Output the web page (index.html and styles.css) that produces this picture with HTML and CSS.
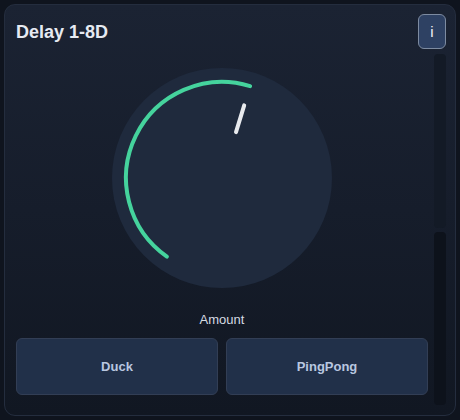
FILE: index.html
```html
<!DOCTYPE html>
<html>
<head>
<meta charset="utf-8">
<link rel="stylesheet" href="styles.css">
</head>
<body>
<div class="card">
  <div class="header">
    <div class="title">Delay 1-8D</div>
    <button class="info">i</button>
  </div>
  <div class="main">
    <div class="content">
      <div class="knob-wrap">
        <svg class="knob" width="220" height="220" viewBox="0 0 220 220">
          <circle cx="110" cy="110" r="110" fill="#1f2a3d"/>
          <path d="M 54.9 188.6 A 96 96 0 0 1 138.1 18.2" fill="none" stroke="#45d39d" stroke-width="4" stroke-linecap="round"/>
          <line x1="124.0" y1="64.1" x2="132.2" y2="37.3" stroke="#e8eaee" stroke-width="4" stroke-linecap="round"/>
        </svg>
      </div>
      <div class="label">Amount</div>
      <div class="buttons">
        <button class="btn">Duck</button>
        <button class="btn">PingPong</button>
      </div>
    </div>
    <div class="meter">
      <div class="meter-top"></div>
      <div class="meter-bottom"></div>
    </div>
  </div>
</div>
</body>
</html>
```
FILE: styles.css
```css
html, body {
  margin: 0;
  padding: 0;
}
body {
  background: #0f141e;
  width: 460px;
  height: 420px;
  font-family: "Liberation Sans", Arial, sans-serif;
  overflow: hidden;
}
.card {
  box-sizing: border-box;
  margin: 4px;
  width: 452px;
  height: 412px;
  border: 1px solid #242d3e;
  border-radius: 11px;
  background: linear-gradient(180deg, #1b2333 0%, #161d2b 50%, #111722 100%);
  padding: 9px 9px 10px 11px;
  display: flex;
  flex-direction: column;
}
.header {
  display: flex;
  align-items: center;
  justify-content: space-between;
  height: 35px;
}
.title {
  color: #e6eaf2;
  font-size: 18px;
  font-weight: bold;
  margin-top: 1px;
}
.info {
  width: 28px;
  height: 35px;
  box-sizing: border-box;
  border: 1px solid #7d8ba1;
  border-radius: 6px;
  background: #2e4163;
  color: #eef1f6;
  font-family: "Liberation Sans", Arial, sans-serif;
  font-size: 15px;
  padding: 0;
}
.main {
  flex: 1;
  display: flex;
  gap: 6px;
  margin-top: 5px;
}
.content {
  flex: 1;
  display: flex;
  flex-direction: column;
  align-items: center;
}
.knob-wrap {
  margin-top: 14px;
  height: 221px;
}
.knob {
  display: block;
}
.label {
  margin-top: 23px;
  color: #d5dae3;
  font-size: 13px;
  line-height: 16px;
}
.buttons {
  margin-top: 10px;
  width: 100%;
  display: flex;
  gap: 8px;
}
.btn {
  flex: 1;
  height: 57px;
  box-sizing: border-box;
  border: 1px solid #323e55;
  border-radius: 6px;
  background: #213049;
  color: #b9c7e0;
  font-family: "Liberation Sans", Arial, sans-serif;
  font-weight: bold;
  font-size: 13px;
}
.meter {
  width: 12px;
  display: flex;
  flex-direction: column;
  gap: 4px;
}
.meter-top {
  height: 174px;
  background: #131a26;
  border-radius: 4px;
}
.meter-bottom {
  flex: 1;
  background: #0d121b;
  border-radius: 4px;
}
```
